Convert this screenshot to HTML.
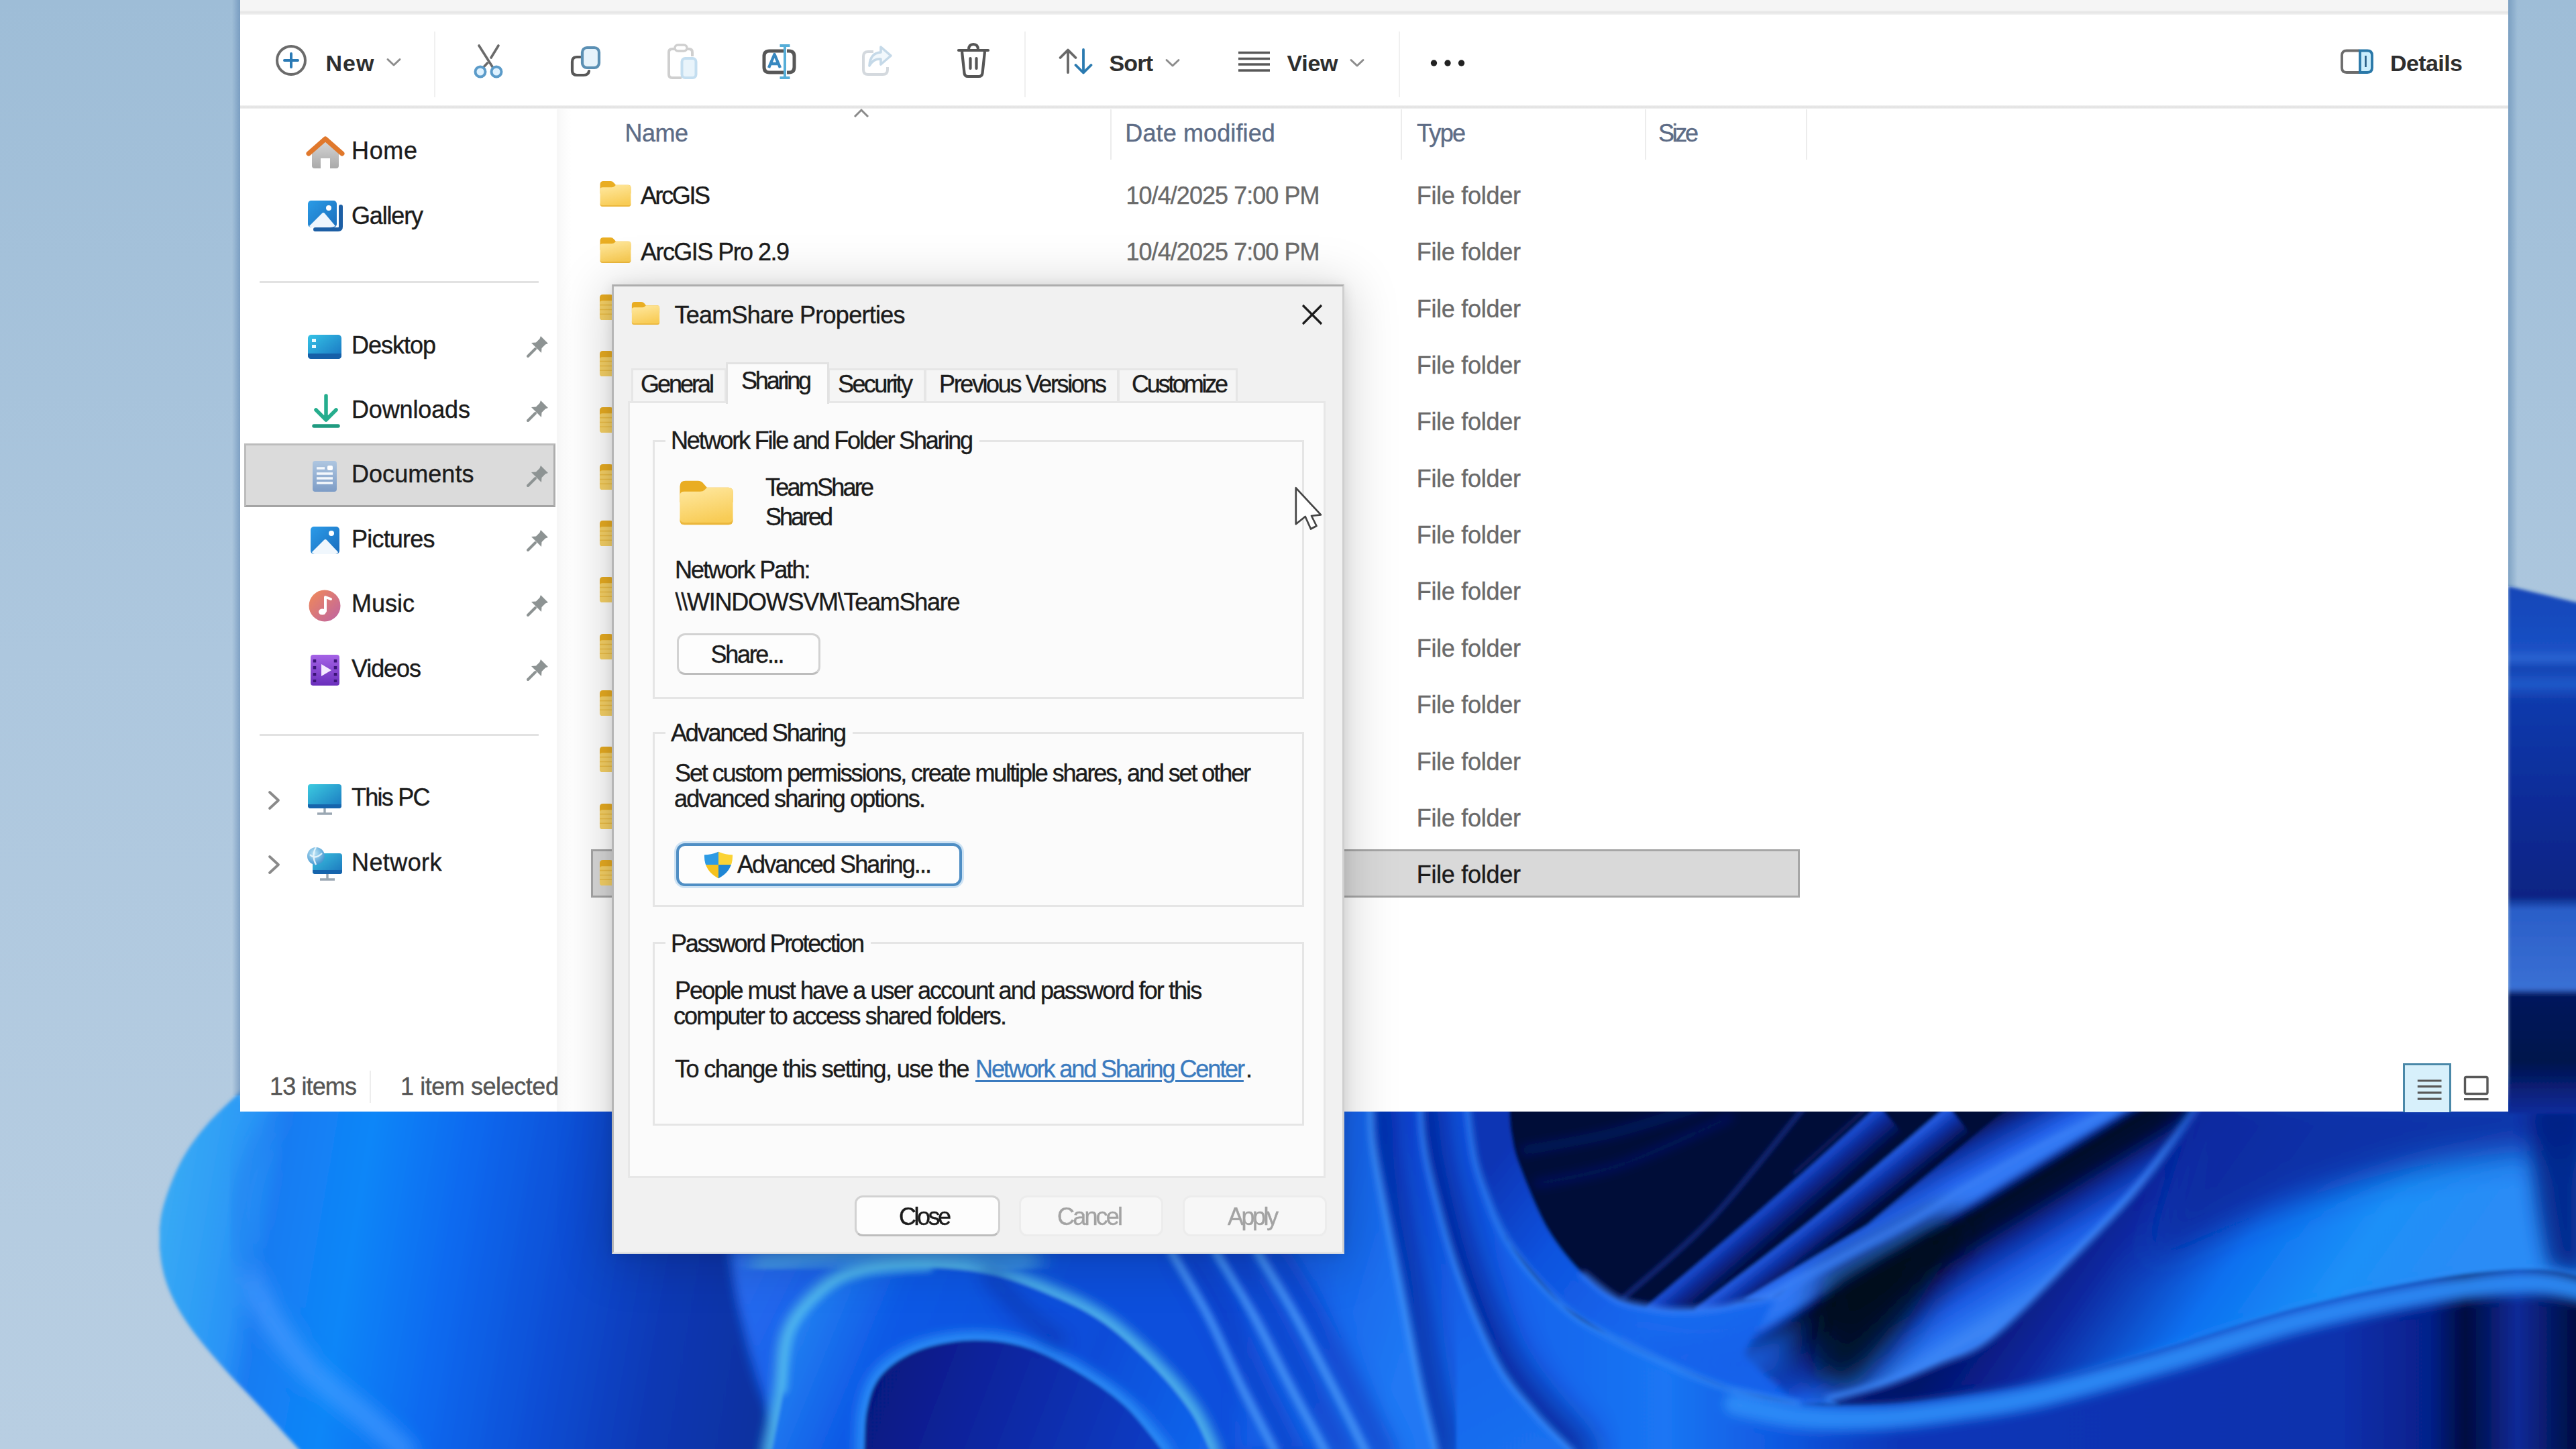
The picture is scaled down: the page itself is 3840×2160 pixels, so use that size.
<!DOCTYPE html>
<html lang="en"><head><meta charset="utf-8"><title>TeamShare Properties</title>
<style>
html,body{margin:0;padding:0;}
body{width:3840px;height:2160px;overflow:hidden;position:relative;background:#a9c4da;font-family:"Liberation Sans",sans-serif;}
div,span,svg{position:absolute;box-sizing:border-box;}
.screen{left:0;top:0;width:3840px;height:2160px;overflow:hidden;}
span{white-space:pre;line-height:1;-webkit-text-stroke:0.4px currentColor;}
</style></head>
<body>
<div class="screen">
<svg width="3840" height="2160" viewBox="0 0 3840 2160" style="left:0;top:0"><defs><linearGradient id="sky" x1="0" y1="0" x2="0" y2="1"><stop offset="0" stop-color="#9ebdd7"/><stop offset="0.45" stop-color="#adc7de"/><stop offset="1" stop-color="#b8cee2"/></linearGradient><filter id="b3" x="-30%" y="-30%" width="160%" height="160%"><feGaussianBlur stdDeviation="2.5"/></filter><filter id="b4" x="-30%" y="-30%" width="160%" height="160%"><feGaussianBlur stdDeviation="4"/></filter><filter id="b8" x="-30%" y="-30%" width="160%" height="160%"><feGaussianBlur stdDeviation="8"/></filter><filter id="b14" x="-30%" y="-30%" width="160%" height="160%"><feGaussianBlur stdDeviation="14"/></filter><filter id="b24" x="-30%" y="-30%" width="160%" height="160%"><feGaussianBlur stdDeviation="24"/></filter><filter id="b40" x="-30%" y="-30%" width="160%" height="160%"><feGaussianBlur stdDeviation="40"/></filter><filter id="b70" x="-30%" y="-30%" width="160%" height="160%"><feGaussianBlur stdDeviation="70"/></filter><linearGradient id="petL" gradientUnits="userSpaceOnUse" x1="240" y1="1830" x2="1180" y2="1990"><stop offset="0" stop-color="#38a9f4"/><stop offset="0.07" stop-color="#2f9ff5"/><stop offset="0.13" stop-color="#2a93f6"/><stop offset="0.17" stop-color="#1a7cf2"/><stop offset="0.3" stop-color="#0b86f8"/><stop offset="0.45" stop-color="#0a6af0"/><stop offset="0.62" stop-color="#0a4fd6"/><stop offset="0.8" stop-color="#0a38b4"/><stop offset="1" stop-color="#08309c"/></linearGradient><radialGradient id="glL" gradientUnits="userSpaceOnUse" cx="600" cy="1990" r="330" gradientTransform="rotate(-35 600 1990) scale(0.7 1.6) translate(260 -700)"><stop offset="0" stop-color="#0a94ff" stop-opacity="0.85"/><stop offset="1" stop-color="#0a94ff" stop-opacity="0"/></radialGradient><linearGradient id="deepA" gradientUnits="userSpaceOnUse" x1="850" y1="0" x2="1180" y2="0"><stop offset="0" stop-color="#0a45cc"/><stop offset="0.5" stop-color="#0836b0"/><stop offset="1" stop-color="#0a3fc0"/></linearGradient><linearGradient id="petA" gradientUnits="userSpaceOnUse" x1="1090" y1="1900" x2="1500" y2="2100"><stop offset="0" stop-color="#2a6cf0"/><stop offset="0.35" stop-color="#165fe8"/><stop offset="1" stop-color="#0c50dc"/></linearGradient><linearGradient id="petB" gradientUnits="userSpaceOnUse" x1="1170" y1="1900" x2="1800" y2="2160"><stop offset="0" stop-color="#2a8cf5"/><stop offset="0.25" stop-color="#0e5ae6"/><stop offset="0.7" stop-color="#0a4cd8"/><stop offset="1" stop-color="#1266ec"/></linearGradient><linearGradient id="petC" gradientUnits="userSpaceOnUse" x1="1300" y1="2000" x2="1720" y2="2160"><stop offset="0" stop-color="#06177c"/><stop offset="0.35" stop-color="#08229a"/><stop offset="1" stop-color="#0b3cc4"/></linearGradient><linearGradient id="stE" gradientUnits="userSpaceOnUse" x1="1700" y1="1870" x2="2100" y2="2000"><stop offset="0" stop-color="#0d4fdc"/><stop offset="0.5" stop-color="#0a46d2"/><stop offset="1" stop-color="#1260ea"/></linearGradient><linearGradient id="pa" gradientUnits="userSpaceOnUse" x1="2628" y1="1801" x2="2662.065033120891" y2="1840.2883381994277"><stop offset="0" stop-color="#1c4ed2"/><stop offset="0.35" stop-color="#0a2c9c"/><stop offset="1" stop-color="#030a38"/></linearGradient><linearGradient id="pb" gradientUnits="userSpaceOnUse" x1="2691" y1="1826" x2="2722.3229203763362" y2="1864.972742514451"><stop offset="0" stop-color="#2258dc"/><stop offset="0.35" stop-color="#0c32a8"/><stop offset="1" stop-color="#030a38"/></linearGradient><linearGradient id="dp3" gradientUnits="userSpaceOnUse" x1="2860" y1="1718" x2="2900" y2="1792"><stop offset="0" stop-color="#040e44"/><stop offset="0.35" stop-color="#0c30a0"/><stop offset="0.75" stop-color="#2260e8"/><stop offset="1" stop-color="#3a80f6"/></linearGradient><linearGradient id="b4g" gradientUnits="userSpaceOnUse" x1="2250" y1="1700" x2="2700" y2="2060"><stop offset="0" stop-color="#0a34b4"/><stop offset="0.25" stop-color="#0e52de"/><stop offset="0.6" stop-color="#1a6cf0"/><stop offset="1" stop-color="#165fe8"/></linearGradient><linearGradient id="val" gradientUnits="userSpaceOnUse" x1="2790" y1="1880" x2="2878" y2="2025"><stop offset="0" stop-color="#3078f4"/><stop offset="0.04" stop-color="#0a2a98"/><stop offset="0.1" stop-color="#020828"/><stop offset="0.28" stop-color="#030a34"/><stop offset="0.48" stop-color="#0a2c9c"/><stop offset="0.7" stop-color="#1a58e0"/><stop offset="0.9" stop-color="#2a74f2"/><stop offset="1" stop-color="#3a84f4"/></linearGradient><linearGradient id="p1" gradientUnits="userSpaceOnUse" x1="3090" y1="1740" x2="3540" y2="2060"><stop offset="0" stop-color="#04126a"/><stop offset="0.22" stop-color="#0a28a0"/><stop offset="0.5" stop-color="#0c70f0"/><stop offset="0.76" stop-color="#1c90f8"/><stop offset="1" stop-color="#2a8cf6"/></linearGradient><linearGradient id="lowR" gradientUnits="userSpaceOnUse" x1="2100" y1="2100" x2="3840" y2="2100"><stop offset="0" stop-color="#0c48d2"/><stop offset="0.1" stop-color="#1664ec"/><stop offset="0.22" stop-color="#1a76f4"/><stop offset="0.32" stop-color="#1058e0"/><stop offset="0.42" stop-color="#0a36b8"/><stop offset="0.8" stop-color="#0a30ac"/><stop offset="0.875" stop-color="#06208a"/><stop offset="0.905" stop-color="#030b40"/><stop offset="0.95" stop-color="#0a2a98"/><stop offset="1" stop-color="#030d42"/></linearGradient><linearGradient id="b2g" gradientUnits="userSpaceOnUse" x1="2050" y1="1700" x2="2300" y2="2160"><stop offset="0" stop-color="#0c48d2"/><stop offset="0.6" stop-color="#1664ea"/><stop offset="1" stop-color="#1a70f0"/></linearGradient><linearGradient id="b1g" gradientUnits="userSpaceOnUse" x1="1760" y1="1900" x2="2100" y2="2000"><stop offset="0" stop-color="#0d50dc"/><stop offset="0.6" stop-color="#1665ea"/><stop offset="1" stop-color="#2078f4"/></linearGradient><linearGradient id="rs" gradientUnits="userSpaceOnUse" x1="0" y1="880" x2="0" y2="1660"><stop offset="0" stop-color="#1446b8"/><stop offset="0.11" stop-color="#1a50c4"/><stop offset="0.13" stop-color="#2a62d0"/><stop offset="0.15" stop-color="#1444b4"/><stop offset="0.18" stop-color="#2058c8"/><stop offset="0.21" stop-color="#0f3aac"/><stop offset="0.4" stop-color="#0a2c98"/><stop offset="0.585" stop-color="#082484"/><stop offset="0.61" stop-color="#2a5ec8"/><stop offset="0.76" stop-color="#3a70d4"/><stop offset="0.775" stop-color="#06185c"/><stop offset="0.9" stop-color="#04124c"/><stop offset="1" stop-color="#0a2c9c"/></linearGradient></defs><rect width="3840" height="2160" fill="url(#sky)"/><g filter="url(#b3)"><path d="M360 1626 C352 1634 326 1657 311 1674 C296 1691 283 1708 272 1728 C261 1748 251 1774 245 1794 C239 1814 238 1828 238 1848 C238 1868 241 1890 248 1911 C255 1932 266 1952 280 1973 C294 1994 312 2014 330 2035 C348 2056 368 2075 388 2097 C408 2119 440 2154 450 2165 L3900 2165 L3900 905 L3840 898 L3739 874 L3739 1640 L360 1640 Z" fill="#0a45cc" />
<path d="M360 1626 C352 1634 326 1657 311 1674 C296 1691 283 1708 272 1728 C261 1748 251 1774 245 1794 C239 1814 238 1828 238 1848 C238 1868 241 1890 248 1911 C255 1932 266 1952 280 1973 C294 1994 312 2014 330 2035 C348 2056 368 2075 388 2097 C408 2119 440 2154 450 2165 L1300 2165 L1300 1640 L360 1640 Z" fill="url(#petL)" />
<path d="M373 1903 C379 1915 392 1949 408 1973 C424 1997 442 2022 466 2046 C490 2070 528 2096 551 2116 C574 2136 597 2157 606 2165" fill="none" stroke="#4a9cff" stroke-width="34" stroke-linecap="round" opacity="0.75" filter="url(#b14)" />
<path d="M419 1660 C413 1669 393 1697 384 1716 C375 1735 369 1756 365 1775 C361 1794 360 1812 361 1833 C362 1854 371 1891 373 1903" fill="none" stroke="#1c7cf0" stroke-width="26" stroke-linecap="round" opacity="0.6" filter="url(#b14)" />
<path d="M1086 1860 C1089 1876 1094 1920 1102 1955 C1110 1990 1121 2037 1133 2072 C1145 2107 1166 2150 1172 2165 L2300 2165 L2300 1860 Z" fill="url(#petA)" filter="url(#b8)"/>
<path d="M1150 2165 C1153 2150 1163 2102 1168 2072 C1173 2042 1170 2011 1180 1986 C1190 1961 1212 1939 1230 1924 C1248 1909 1262 1903 1288 1897 C1314 1891 1353 1888 1385 1889 C1417 1890 1453 1894 1482 1901 C1511 1908 1534 1917 1560 1928 C1586 1939 1612 1950 1638 1967 C1664 1984 1692 2010 1715 2033 C1738 2056 1759 2081 1774 2103 C1789 2125 1800 2155 1805 2165" fill="none" stroke="#4fb4ea" stroke-width="30" stroke-linecap="round" opacity="0.95" filter="url(#b8)" />
<path d="M1150 2165 C1153 2150 1163 2102 1168 2072 C1173 2042 1170 2011 1180 1986 C1190 1961 1212 1939 1230 1924 C1248 1909 1262 1903 1288 1897 C1314 1891 1353 1888 1385 1889 C1417 1890 1453 1894 1482 1901 C1511 1908 1534 1917 1560 1928 C1586 1939 1612 1950 1638 1967 C1664 1984 1692 2010 1715 2033 C1738 2056 1759 2081 1774 2103 C1789 2125 1800 2155 1805 2165  Z" fill="url(#petB)" />
<path d="M1168 2072 C1170 2058 1170 2011 1180 1986 C1190 1961 1212 1939 1230 1924 C1248 1909 1262 1903 1288 1897 C1314 1891 1369 1890 1385 1889" fill="none" stroke="#49b0f0" stroke-width="12" stroke-linecap="round" opacity="0.9" filter="url(#b4)" />
<path d="M1130 1885 C1152 1882 1215 1871 1260 1868 C1305 1865 1353 1864 1400 1866 C1447 1868 1517 1878 1540 1880" fill="none" stroke="#56b8e4" stroke-width="26" stroke-linecap="round" opacity="0.8" filter="url(#b14)" />
<path d="M1288 2165 C1289 2155 1288 2122 1292 2103 C1296 2084 1300 2067 1312 2052 C1324 2037 1344 2023 1366 2014 C1388 2005 1418 1999 1444 1998 C1470 1997 1495 1999 1521 2006 C1547 2013 1573 2026 1599 2041 C1625 2056 1653 2074 1676 2095 C1699 2116 1725 2153 1735 2165" fill="none" stroke="#2f8ff8" stroke-width="26" stroke-linecap="round" opacity="0.95" filter="url(#b8)" />
<path d="M1288 2165 C1289 2155 1288 2122 1292 2103 C1296 2084 1300 2067 1312 2052 C1324 2037 1344 2023 1366 2014 C1388 2005 1418 1999 1444 1998 C1470 1997 1495 1999 1521 2006 C1547 2013 1573 2026 1599 2041 C1625 2056 1653 2074 1676 2095 C1699 2116 1725 2153 1735 2165  Z" fill="url(#petC)" />
<path d="M1474 1898 C1482 1907 1502 1933 1520 1950 C1538 1967 1570 1992 1580 2000" fill="none" stroke="#06279a" stroke-width="20" stroke-linecap="round" opacity="0.6" filter="url(#b14)" />
<path d="M2200 1640 L3300 1640 L3300 2100 L2300 2100 Z" fill="#030a38"/>
<path d="M2270 1715 C2292 1711 2355 1701 2400 1690 C2445 1679 2517 1655 2540 1648" fill="none" stroke="#0b2a8c" stroke-width="9" stroke-linecap="round" opacity="0.75" filter="url(#b8)" />
<path d="M2290 1765 C2312 1760 2372 1752 2420 1735 C2468 1718 2553 1677 2580 1665" fill="none" stroke="#0b2a8c" stroke-width="9" stroke-linecap="round" opacity="0.65" filter="url(#b8)" />
<path d="M2420 1935 C2442 1915 2509 1862 2554 1814 C2599 1766 2667 1677 2690 1650" fill="none" stroke="#16348e" stroke-width="6" stroke-linecap="round" opacity="0.9" filter="url(#b3)" />
<path d="M2675 1749 L2785 1650" fill="none" stroke="#0f2878" stroke-width="5" stroke-linecap="round" opacity="0.8" filter="url(#b3)" />
<path d="M2454 1948 C2483 1924 2570 1851 2628 1801 C2686 1751 2771 1674 2800 1648 L2836 1689 L2664 1842 L2490 1989 Z" fill="url(#pa)"/>
<path d="M2526 1951 C2554 1930 2628 1876 2691 1826 C2754 1776 2868 1678 2903 1648 L2936 1689 L2724 1867 L2559 1992 Z" fill="url(#pb)"/>
<path d="M2597 1938 L2784 1826 L2997 1648 L3170 1648 L3141 1662 L3001 1733 L2846 1823 L2675 1913 L2640 1935 Z" fill="url(#dp3)"/>
<path d="M2249 1640 C2250 1648 2250 1674 2253 1690 C2256 1706 2256 1713 2265 1737 C2274 1761 2292 1807 2308 1834 C2324 1861 2343 1883 2360 1900 C2377 1917 2394 1930 2411 1938 C2428 1946 2444 1947 2460 1950 C2476 1953 2487 1954 2504 1954 C2521 1954 2544 1952 2560 1950 C2576 1948 2582 1945 2597 1942 C2612 1939 2635 1937 2648 1932 C2661 1927 2656 1924 2675 1913 C2694 1902 2732 1883 2760 1868 C2788 1853 2806 1846 2846 1823 C2886 1800 2952 1760 3001 1733 C3050 1706 3111 1678 3141 1662 C3171 1646 3174 1644 3180 1640 L3300 1655 L3300 2100 L2804 2094 L2680 2092 L2586 2073 L2493 2036 L2400 1992 L2327 1945 L2249 1853 L2207 1756 L2194 1700 L2187 1640 Z" fill="url(#b4g)" />
<path d="M2648 1932 C2652 1929 2656 1924 2675 1913 C2694 1902 2732 1883 2760 1868 C2788 1853 2806 1846 2846 1823 C2886 1800 2952 1760 3001 1733 C3050 1706 3111 1678 3141 1662 C3171 1646 3174 1644 3180 1640 L3285 1640 L3282 1640 L3240 1700 L3180 1777 L3094 1868 L2970 1990 L2890 2030 L2810 2062 L2726 2086 L2680 2092 L2600 2020 Z" fill="url(#val)" filter="url(#b4)"/>
<path d="M2400 1975 L2524 2000 L2640 1990 L2700 1960 L2660 2050 L2590 2080 L2450 2030 Z" fill="#1862ea" filter="url(#b24)" opacity="0.95"/>
<path d="M2720 1905 L2800 1862 L2900 1810 L2930 1830 L2830 1990 L2760 2075 L2700 2050 Z" fill="#02071f" filter="url(#b24)" opacity="0.9"/>
<path d="M2360 1900 C2368 1906 2394 1930 2411 1938 C2428 1946 2444 1947 2460 1950 C2476 1953 2487 1954 2504 1954 C2521 1954 2544 1952 2560 1950 C2576 1948 2582 1945 2597 1942 C2612 1939 2635 1937 2648 1932 C2661 1927 2656 1924 2675 1913 C2694 1902 2732 1883 2760 1868 C2788 1853 2806 1846 2846 1823 C2886 1800 2952 1760 3001 1733 C3050 1706 3111 1678 3141 1662 C3171 1646 3174 1644 3180 1640" fill="none" stroke="#3a80f6" stroke-width="9" stroke-linecap="round" opacity="0.9" filter="url(#b4)" />
<path d="M3282 1640 C3275 1650 3257 1677 3240 1700 C3223 1723 3204 1749 3180 1777 C3156 1805 3129 1832 3094 1868 C3059 1904 3004 1963 2970 1990 C2936 2017 2917 2018 2890 2030 C2863 2042 2837 2053 2810 2062 C2783 2071 2740 2082 2726 2086 L2760 2100 L2900 2094 L3034 2067 L3228 2009 L3422 1950 L3616 1908 L3772 1892 L3860 1906 L3860 1640 Z" fill="url(#p1)" />
<path d="M2726 2086 C2740 2082 2783 2071 2810 2062 C2837 2053 2863 2042 2890 2030 C2917 2018 2936 2017 2970 1990 C3004 1963 3059 1904 3094 1868 C3129 1832 3156 1805 3180 1777 C3204 1749 3223 1723 3240 1700 C3257 1677 3275 1650 3282 1640" fill="none" stroke="#3f88f6" stroke-width="10" stroke-linecap="round" opacity="0.9" filter="url(#b4)" />
<path d="M3280 1620 L3860 1620 L3860 1715 C3700 1710 3500 1740 3200 1880 Z" fill="#0a2aa0" opacity="0.9" filter="url(#b24)"/>
<path d="M3775 1640 L3860 1640 L3860 1900 L3800 1890 C3780 1800 3768 1700 3775 1640 Z" fill="#051c80" opacity="0.85" filter="url(#b14)"/>
<path d="M2187 1640 C2188 1650 2191 1681 2194 1700 C2197 1719 2198 1730 2207 1756 C2216 1782 2229 1822 2249 1853 C2269 1884 2302 1922 2327 1945 C2352 1968 2372 1977 2400 1992 C2428 2007 2462 2022 2493 2036 C2524 2050 2555 2064 2586 2073 C2617 2082 2644 2088 2680 2092 C2716 2096 2763 2096 2804 2094 C2845 2092 2887 2086 2928 2080 C2969 2074 3002 2070 3052 2058 C3102 2046 3166 2027 3228 2009 C3290 1991 3357 1967 3422 1950 C3487 1933 3558 1918 3616 1908 C3674 1898 3731 1892 3772 1892 C3813 1892 3845 1904 3860 1906 L3860 2165 L2100 2165 L2100 1640 Z" fill="url(#lowR)" />
<path d="M2586 2093 C2602 2096 2644 2108 2680 2112 C2716 2116 2763 2116 2804 2114 C2845 2112 2887 2106 2928 2100 C2969 2094 3002 2090 3052 2078 C3102 2066 3166 2047 3228 2029 C3290 2011 3357 1987 3422 1970 C3487 1953 3558 1938 3616 1928 C3674 1918 3731 1912 3772 1912 C3813 1912 3845 1924 3860 1926" fill="none" stroke="#2f8cf8" stroke-width="34" stroke-linecap="round" opacity="0.95" filter="url(#b8)" />
<path d="M2187 1640 C2188 1650 2191 1681 2194 1700 C2197 1719 2198 1730 2207 1756 C2216 1782 2229 1822 2249 1853 C2269 1884 2302 1922 2327 1945 C2352 1968 2372 1977 2400 1992 C2428 2007 2462 2022 2493 2036 C2524 2050 2555 2064 2586 2073 C2617 2082 2664 2089 2680 2092" fill="none" stroke="#3a8ef8" stroke-width="8" stroke-linecap="round" opacity="0.8" filter="url(#b4)" />
<path d="M2117 1640 C2118 1650 2119 1681 2122 1700 C2125 1719 2125 1724 2133 1756 C2141 1788 2156 1847 2172 1892 C2188 1937 2211 1992 2230 2028 C2249 2064 2269 2083 2288 2106 C2307 2129 2336 2155 2346 2165" fill="none" stroke="#041e8c" stroke-width="64" stroke-linecap="round" opacity="0.85" filter="url(#b24)" />
<path d="M2117 1640 C2118 1650 2119 1681 2122 1700 C2125 1719 2125 1724 2133 1756 C2141 1788 2156 1847 2172 1892 C2188 1937 2211 1992 2230 2028 C2249 2064 2269 2083 2288 2106 C2307 2129 2336 2155 2346 2165 L2000 2165 L2000 1640 Z" fill="url(#b2g)" />
<path d="M2117 1640 C2118 1650 2119 1681 2122 1700 C2125 1719 2125 1724 2133 1756 C2141 1788 2156 1847 2172 1892 C2188 1937 2211 1992 2230 2028 C2249 2064 2269 2083 2288 2106 C2307 2129 2336 2155 2346 2165" fill="none" stroke="#3f90fa" stroke-width="8" stroke-linecap="round" opacity="0.85" filter="url(#b4)" />
<path d="M2043 1640 C2044 1650 2043 1674 2046 1700 C2049 1726 2055 1753 2063 1795 C2071 1837 2085 1905 2094 1950 C2103 1995 2109 2031 2117 2067 C2125 2103 2137 2149 2141 2165" fill="none" stroke="#041e8c" stroke-width="60" stroke-linecap="round" opacity="0.85" filter="url(#b24)" />
<path d="M2043 1640 C2044 1650 2043 1674 2046 1700 C2049 1726 2055 1753 2063 1795 C2071 1837 2085 1905 2094 1950 C2103 1995 2109 2031 2117 2067 C2125 2103 2137 2149 2141 2165 L1850 2165 L1850 2000 L1870 1860 L2000 1640 Z" fill="url(#b1g)" filter="url(#b14)"/>
<path d="M2043 1640 C2044 1650 2043 1674 2046 1700 C2049 1726 2055 1753 2063 1795 C2071 1837 2085 1905 2094 1950 C2103 1995 2109 2031 2117 2067 C2125 2103 2137 2149 2141 2165 L1960 2165 L1960 1640 Z" fill="url(#b1g)" />
<path d="M2043 1640 C2044 1650 2043 1674 2046 1700 C2049 1726 2055 1753 2063 1795 C2071 1837 2085 1905 2094 1950 C2103 1995 2109 2031 2117 2067 C2125 2103 2137 2149 2141 2165" fill="none" stroke="#4a9afa" stroke-width="8" stroke-linecap="round" opacity="0.85" filter="url(#b4)" />
<path d="M1772 1866 C1781 1882 1808 1926 1826 1960 C1844 1994 1861 2036 1878 2070 C1895 2104 1919 2149 1927 2165" fill="none" stroke="#0a3cc4" stroke-width="40" stroke-linecap="round" opacity="0.7" filter="url(#b14)" />
<path d="M1746 1866 C1755 1882 1782 1926 1800 1960 C1818 1994 1835 2036 1852 2070 C1869 2104 1893 2149 1901 2165" fill="none" stroke="#4a96f8" stroke-width="11" stroke-linecap="round" opacity="0.95" filter="url(#b4)" />
<path d="M1838 1866 C1847 1882 1875 1926 1894 1960 C1913 1994 1933 2036 1951 2070 C1969 2104 1994 2149 2002 2165" fill="none" stroke="#0a3cc4" stroke-width="40" stroke-linecap="round" opacity="0.7" filter="url(#b14)" />
<path d="M1812 1866 C1821 1882 1849 1926 1868 1960 C1887 1994 1907 2036 1925 2070 C1943 2104 1968 2149 1976 2165" fill="none" stroke="#4a96f8" stroke-width="11" stroke-linecap="round" opacity="0.95" filter="url(#b4)" />
<path d="M1900 1866 C1909 1882 1937 1926 1956 1960 C1975 1994 1996 2036 2014 2070 C2032 2104 2054 2149 2062 2165" fill="none" stroke="#0a3cc4" stroke-width="40" stroke-linecap="round" opacity="0.7" filter="url(#b14)" />
<path d="M1874 1866 C1883 1882 1911 1926 1930 1960 C1949 1994 1970 2036 1988 2070 C2006 2104 2028 2149 2036 2165" fill="none" stroke="#4a96f8" stroke-width="11" stroke-linecap="round" opacity="0.95" filter="url(#b4)" />
<path d="M3739 874 L3860 903 L3860 1660 L3739 1660 Z" fill="url(#rs)"/></g></svg>
<div style="left:346px;top:0px;width:12px;height:1633px;background:linear-gradient(90deg,rgba(90,130,175,0),rgba(90,130,175,0.55));"></div>
<div style="left:3739px;top:0px;width:14px;height:874px;background:linear-gradient(90deg,rgba(100,140,180,0.6),rgba(100,140,180,0));"></div>
<div style="left:358px;top:0px;width:3381px;height:1657px;background:#ffffff;overflow:hidden;"><div style="left:0px;top:0px;width:3381px;height:17px;background:#f5f5f5;"></div><div style="left:0px;top:16px;width:3381px;height:6px;background:linear-gradient(#ececec,#e6e6e6 50%,#f4f4f4);"></div><div style="left:0px;top:157px;width:3381px;height:5px;background:linear-gradient(#f2f2f2,#e0e0e0 50%,#f0f0f0);"></div><div style="left:472px;top:163px;width:22px;height:1494px;background:linear-gradient(90deg,#f6f6f6,#fbfbfb 45%,#ffffff);"></div></div>
<div style="left:647px;top:47px;width:2px;height:98px;background:#f0f0f0;"></div>
<div style="left:1527px;top:47px;width:2px;height:98px;background:#f0f0f0;"></div>
<div style="left:2085px;top:47px;width:2px;height:98px;background:#f0f0f0;"></div>
<svg style="left:408px;top:64px" width="52" height="52" viewBox="0 0 52 52"><circle cx="26" cy="26" r="21" fill="none" stroke="#6b6b6b" stroke-width="4"/><path d="M26 16V36M16 26H36" stroke="#2b7ab5" stroke-width="4" stroke-linecap="round"/></svg>
<svg style="left:574.5px;top:84.5px" width="24" height="16" viewBox="0 0 24 16"><path d="M3 3.5 L12 12 L21 3.5" fill="none" stroke="#8c8c8c" stroke-width="3" stroke-linecap="round" stroke-linejoin="round"/></svg>
<svg style="left:700px;top:62px" width="56" height="60" viewBox="0 0 56 60"><path d="M14 6 L40 47" stroke="#6a6a6a" stroke-width="3.6" stroke-linecap="round"/><path d="M43 6 L32 24" stroke="#6a6a6a" stroke-width="3.6" stroke-linecap="round"/><path d="M27.5 31 L19 40" stroke="#6a6a6a" stroke-width="3.6"/><circle cx="16" cy="45" r="7.5" fill="#dff2ff" stroke="#5b9bc9" stroke-width="4"/><circle cx="40" cy="45" r="7.5" fill="#dff2ff" stroke="#5b9bc9" stroke-width="4"/></svg>
<svg style="left:846px;top:64px" width="54" height="54" viewBox="0 0 54 54"><path d="M19 21 H14 Q7 21 7 28 V41 Q7 48 14 48 H24 Q31 48 32 42" fill="none" stroke="#585858" stroke-width="4.2" stroke-linecap="round"/><rect x="22" y="7" width="25" height="30" rx="7" fill="#e6f3fb" stroke="#5b90b4" stroke-width="4.2"/></svg>
<svg style="left:990px;top:62px" width="54" height="60" viewBox="0 0 54 60"><path d="M26 54 H12 Q7 54 7 49 V16 Q7 11 12 11 H37 Q42 11 42 16 V22" fill="none" stroke="#cfcfcf" stroke-width="4"/><rect x="16" y="5" width="18" height="9" rx="4.5" fill="#fff" stroke="#cfcfcf" stroke-width="3.4"/><rect x="26.5" y="25" width="21" height="29" rx="5" fill="#e9f4fb" stroke="#c4def0" stroke-width="4"/></svg>
<svg style="left:1130px;top:62px" width="62" height="60" viewBox="0 0 62 60"><path d="M38 14 H17 Q9 14 9 22 V38 Q9 46 17 46 H38" fill="none" stroke="#575757" stroke-width="5"/><path d="M43 14 H46 Q54 14 54 22 V38 Q54 46 46 46 H43" fill="none" stroke="#575757" stroke-width="5"/><path d="M16 39 L24.5 19 L33 39 M19 33 H30" fill="none" stroke="#3888c0" stroke-width="4.4" stroke-linejoin="round"/><path d="M40 6 V54 M32.5 6 H47.5 M32.5 54 H47.5" stroke="#56aed8" stroke-width="4"/></svg>
<svg style="left:1280px;top:62px" width="56" height="56" viewBox="0 0 56 56"><path d="M22 15 H14 Q7 15 7 22 V42 Q7 49 14 49 H36 Q43 49 43 42 V38" fill="none" stroke="#d4d9de" stroke-width="4"/><path d="M33 8 L48 21 L33 34 V26 Q22 25 16 36 Q17 17 33 16 Z" fill="#f2f8fc" stroke="#c5d9e8" stroke-width="3.6" stroke-linejoin="round"/></svg>
<svg style="left:1424px;top:60px" width="54" height="60" viewBox="0 0 54 60"><path d="M5 15 H49" stroke="#555" stroke-width="4.2" stroke-linecap="round"/><path d="M20 14 Q20 6 27 6 Q34 6 34 14" fill="none" stroke="#555" stroke-width="4"/><path d="M10 17 L13.5 49 Q14 54 19 54 H35 Q40 54 40.500 49 L44 17" fill="none" stroke="#555" stroke-width="4.2"/><path d="M22.500 27 V42 M31.500 27 V42" stroke="#555" stroke-width="4.2" stroke-linecap="round"/></svg>
<svg style="left:1574px;top:66px" width="60" height="50" viewBox="0 0 60 50"><path d="M18 42 V9 M6.500 20 L18 8.500 L29.500 20" fill="none" stroke="#686868" stroke-width="3.8" stroke-linecap="round" stroke-linejoin="round"/><path d="M41 8 V42 M29.500 31 L41 42.500 L52.500 31" fill="none" stroke="#2a7ab0" stroke-width="3.8" stroke-linecap="round" stroke-linejoin="round"/></svg>
<svg style="left:1736px;top:85.5px" width="24" height="16" viewBox="0 0 24 16"><path d="M3 3.5 L12 12 L21 3.5" fill="none" stroke="#8c8c8c" stroke-width="3" stroke-linecap="round" stroke-linejoin="round"/></svg>
<svg style="left:1842px;top:72px" width="56" height="40" viewBox="0 0 56 40"><path d="M4 6.500 H51 M4 15.500 H51 M4 24 H51 M4 33 H51" stroke="#585858" stroke-width="3.6"/></svg>
<svg style="left:2010.5px;top:85.5px" width="24" height="16" viewBox="0 0 24 16"><path d="M3 3.5 L12 12 L21 3.5" fill="none" stroke="#8c8c8c" stroke-width="3" stroke-linecap="round" stroke-linejoin="round"/></svg>
<svg style="left:2128px;top:84px" width="62" height="20" viewBox="0 0 62 20"><circle cx="9.500" cy="10" r="4.700" fill="#222"/><circle cx="30" cy="10" r="4.700" fill="#222"/><circle cx="50.500" cy="10" r="4.700" fill="#222"/></svg>
<svg style="left:3484px;top:68px" width="60" height="48" viewBox="0 0 60 48"><path d="M33 7.500 H14 Q7 7.500 7 14.500 V33 Q7 40 14 40 H33" fill="none" stroke="#6c6c6c" stroke-width="3.800"/><path d="M34 7.500 H45 Q52 7.500 52 14.500 V33 Q52 40 45 40 H34 Z" fill="#cbeefc" stroke="#2a78a8" stroke-width="3.800"/><path d="M42.500 15 V32" stroke="#245a82" stroke-width="2.600"/></svg>
<div style="left:364px;top:661px;width:464px;height:95px;background:#dbdbdb;border:3px solid #bcbcbc;border-bottom-color:#a4a4a4;border-right-color:#adadad;"></div>
<svg style="left:456px;top:200px" width="58" height="56" viewBox="0 0 58 56"><defs><linearGradient id="h1" x1="0" y1="0" x2="0" y2="1"><stop offset="0" stop-color="#d6d6d6"/><stop offset="1" stop-color="#a9a9a9"/></linearGradient></defs><path d="M9 27 L29 10 L49 27 V47 Q49 51 45 51 H36 V36 H22 V51 H13 Q9 51 9 47 Z" fill="url(#h1)"/><path d="M4 29 L29 7 L54 29" fill="none" stroke="#e0782c" stroke-width="7" stroke-linecap="round" stroke-linejoin="round"/></svg>
<svg style="left:456px;top:296px" width="58" height="56" viewBox="0 0 58 56"><defs><linearGradient id="g2" x1="0" y1="0" x2="1" y2="1"><stop offset="0" stop-color="#2a9be6"/><stop offset="1" stop-color="#1b6fbd"/></linearGradient></defs><path d="M14 46 H48 Q52 46 52 42 V12" fill="none" stroke="#1d5fa5" stroke-width="6" stroke-linecap="round"/><rect x="3" y="3" width="43" height="40" rx="5" fill="url(#g2)"/><circle cx="34" cy="14" r="4" fill="#fff"/><path d="M5 41 L24 22 Q26 20 28 22 L44 41 Q40 43 36 43 H9 Q6 43 5 41 Z" fill="#eef6fd"/></svg>
<svg style="left:456px;top:496px" width="58" height="44" viewBox="0 0 58 44"><defs><linearGradient id="d3" x1="0" y1="0" x2="1" y2="1"><stop offset="0" stop-color="#35c3e6"/><stop offset="1" stop-color="#1873c1"/></linearGradient></defs><rect x="3" y="3" width="50" height="36" rx="5" fill="url(#d3)"/><path d="M3 31 H53 V34 Q53 39 48 39 H8 Q3 39 3 34 Z" fill="#155fa8"/><rect x="9" y="9" width="6" height="5" fill="#e8faff"/><rect x="9" y="18" width="6" height="5" fill="#e8faff"/></svg>
<svg style="left:784px;top:498px" width="36" height="36" viewBox="0 0 36 36"><path d="M22 3 L33 14 L29 15.500 L23.500 21 L23 28 L8 13 L15 12.500 L20.500 7 Z" fill="#8d9393"/><path d="M14 22 L3 33" stroke="#8d9393" stroke-width="4" stroke-linecap="round"/></svg>
<svg style="left:462px;top:585px" width="48" height="56" viewBox="0 0 48 56"><path d="M24 5 V40 M9 26 L24 41 L39 26" fill="none" stroke="#25ad8d" stroke-width="5.500" stroke-linecap="round" stroke-linejoin="round"/><path d="M6 50 H42" stroke="#1f9b80" stroke-width="5.500" stroke-linecap="round"/></svg>
<svg style="left:784px;top:594px" width="36" height="36" viewBox="0 0 36 36"><path d="M22 3 L33 14 L29 15.500 L23.500 21 L23 28 L8 13 L15 12.500 L20.500 7 Z" fill="#8d9393"/><path d="M14 22 L3 33" stroke="#8d9393" stroke-width="4" stroke-linecap="round"/></svg>
<svg style="left:463px;top:684px" width="42" height="52" viewBox="0 0 42 52"><defs><linearGradient id="o4" x1="0" y1="0" x2="0" y2="1"><stop offset="0" stop-color="#aec6e0"/><stop offset="1" stop-color="#7d9cc6"/></linearGradient></defs><rect x="3" y="3" width="36" height="46" rx="4" fill="url(#o4)"/><path d="M9 14 H21 M9 22 H33 M9 29 H33 M9 36 H33" stroke="#f4f8fc" stroke-width="3.400"/><rect x="25" y="10" width="8" height="7" rx="2" fill="#fff"/></svg>
<svg style="left:784px;top:691px" width="36" height="36" viewBox="0 0 36 36"><path d="M22 3 L33 14 L29 15.500 L23.500 21 L23 28 L8 13 L15 12.500 L20.500 7 Z" fill="#8d9393"/><path d="M14 22 L3 33" stroke="#8d9393" stroke-width="4" stroke-linecap="round"/></svg>
<svg style="left:460px;top:782px" width="50" height="48" viewBox="0 0 50 48"><defs><linearGradient id="p5" x1="0" y1="0" x2="1" y2="1"><stop offset="0" stop-color="#2c9be8"/><stop offset="1" stop-color="#1a6dbd"/></linearGradient></defs><rect x="3" y="3" width="43" height="41" rx="5" fill="url(#p5)"/><circle cx="34" cy="13" r="4" fill="#fff"/><path d="M5 41 L23 23 Q25 21 27 23 L44 41 Q43 44 40 44 H9 Q6 44 5 41 Z" fill="#f0f7fd"/></svg>
<svg style="left:784px;top:787px" width="36" height="36" viewBox="0 0 36 36"><path d="M22 3 L33 14 L29 15.500 L23.500 21 L23 28 L8 13 L15 12.500 L20.500 7 Z" fill="#8d9393"/><path d="M14 22 L3 33" stroke="#8d9393" stroke-width="4" stroke-linecap="round"/></svg>
<svg style="left:458px;top:877px" width="52" height="52" viewBox="0 0 52 52"><defs><linearGradient id="m6" x1="0" y1="0" x2="1" y2="1"><stop offset="0" stop-color="#f28a56"/><stop offset="1" stop-color="#bd63a4"/></linearGradient></defs><circle cx="26" cy="26" r="23.500" fill="url(#m6)"/><path d="M27 34 V13 L35 16" fill="none" stroke="#fff" stroke-width="4" stroke-linecap="round" stroke-linejoin="round"/><ellipse cx="22.500" cy="35" rx="5.500" ry="4.600" fill="#fff"/></svg>
<svg style="left:784px;top:884px" width="36" height="36" viewBox="0 0 36 36"><path d="M22 3 L33 14 L29 15.500 L23.500 21 L23 28 L8 13 L15 12.500 L20.500 7 Z" fill="#8d9393"/><path d="M14 22 L3 33" stroke="#8d9393" stroke-width="4" stroke-linecap="round"/></svg>
<svg style="left:460px;top:973px" width="50" height="52" viewBox="0 0 50 52"><defs><linearGradient id="v7" x1="0" y1="0" x2="0" y2="1"><stop offset="0" stop-color="#a563e6"/><stop offset="1" stop-color="#6a2fbc"/></linearGradient></defs><rect x="3" y="3" width="43" height="46" rx="4" fill="url(#v7)"/><path d="M19 17 L34 26 L19 35 Z" fill="#f4eaff"/><path d="M9 10 V44 M40 10 V44" stroke="#3b1378" stroke-width="4.500" stroke-dasharray="4.500 5.500"/></svg>
<svg style="left:784px;top:980px" width="36" height="36" viewBox="0 0 36 36"><path d="M22 3 L33 14 L29 15.500 L23.500 21 L23 28 L8 13 L15 12.500 L20.500 7 Z" fill="#8d9393"/><path d="M14 22 L3 33" stroke="#8d9393" stroke-width="4" stroke-linecap="round"/></svg>
<svg style="left:456px;top:1166px" width="58" height="52" viewBox="0 0 58 52"><defs><linearGradient id="t8" x1="0" y1="0" x2="1" y2="1"><stop offset="0" stop-color="#3ccbe0"/><stop offset="1" stop-color="#1a78c0"/></linearGradient></defs><rect x="3" y="3" width="50" height="36" rx="4" fill="url(#t8)"/><path d="M3 33 H53 V35 Q53 39 49 39 H7 Q3 39 3 35 Z" fill="#1664ac"/><path d="M28 39 V46 M17 47 H39" stroke="#9aa7b2" stroke-width="3.400"/></svg>
<svg style="left:456px;top:1260px" width="58" height="56" viewBox="0 0 58 56"><defs><linearGradient id="n9" x1="0" y1="0" x2="1" y2="1"><stop offset="0" stop-color="#3cc3e0"/><stop offset="1" stop-color="#1a74bc"/></linearGradient><radialGradient id="n10" cx=".4" cy=".35" r=".7"><stop offset="0" stop-color="#bfe6f6"/><stop offset="1" stop-color="#3f93cf"/></radialGradient></defs><rect x="10" y="12" width="44" height="31" rx="4" fill="url(#n9)"/><path d="M10 37 H54 V39 Q54 43 50 43 H14 Q10 43 10 39 Z" fill="#1664ac"/><path d="M32 43 V50 M21 51 H43" stroke="#9aa7b2" stroke-width="3.400"/><circle cx="15" cy="16" r="13" fill="url(#n10)"/><path d="M6 14 Q14 22 24 12 M15 3 Q8 15 15 29" fill="none" stroke="#eaf7fd" stroke-width="2.400" opacity=".9"/></svg>
<svg style="left:398px;top:1177px" width="22" height="32" viewBox="0 0 22 32"><path d="M4 4 L17 16 L4 28" fill="none" stroke="#8a8a8a" stroke-width="3.800" stroke-linecap="round" stroke-linejoin="round"/></svg>
<svg style="left:398px;top:1273px" width="22" height="32" viewBox="0 0 22 32"><path d="M4 4 L17 16 L4 28" fill="none" stroke="#8a8a8a" stroke-width="3.800" stroke-linecap="round" stroke-linejoin="round"/></svg>
<div style="left:387px;top:419px;width:416px;height:3px;background:#e2e2e2;"></div>
<div style="left:387px;top:1094px;width:416px;height:3px;background:#e2e2e2;"></div>
<div style="left:1655px;top:163px;width:2px;height:75px;background:#ececec;"></div>
<div style="left:2088px;top:163px;width:2px;height:75px;background:#ececec;"></div>
<div style="left:2452px;top:163px;width:2px;height:75px;background:#ececec;"></div>
<div style="left:2692px;top:163px;width:2px;height:75px;background:#ececec;"></div>
<svg style="left:1270px;top:160px" width="28" height="18" viewBox="0 0 28 18"><path d="M4 14 L14 4 L24 14" fill="none" stroke="#8a8a8a" stroke-width="3"/></svg>
<div style="left:881px;top:1266px;width:1802px;height:72px;background:#d9d9d9;border:3px solid #a6a6a6;"></div>
<svg style="left:893px;top:269px" width="49" height="40" viewBox="0 0 49 41"><defs><linearGradient id="f11" x1="0" y1="0" x2="0.3" y2="1"><stop offset="0" stop-color="#ffe9a2"/><stop offset="1" stop-color="#f8cc56"/></linearGradient></defs><path d="M1 6 Q1 1 6 1 L17 1 Q20 1 22 3.5 L25 7 L44 7 Q48 7 48 11 L48 20 L1 20 Z" fill="#e9ad22"/><path d="M1 14 Q1 10.5 5 10.5 L19 10.5 Q21.5 10.5 23 9 L25 7 L44 7 Q48 7 48 11 L48 36 Q48 40 44 40 L5 40 Q1 40 1 36 Z" fill="url(#f11)"/><path d="M1 36 Q1 40 5 40 L44 40 Q48 40 48 36 L48 34 Q48 38 44 38 L5 38 Q1 38 1 34 Z" fill="#e3a92a" opacity=".6"/></svg>
<svg style="left:893px;top:353px" width="49" height="40" viewBox="0 0 49 41"><defs><linearGradient id="f12" x1="0" y1="0" x2="0.3" y2="1"><stop offset="0" stop-color="#ffe9a2"/><stop offset="1" stop-color="#f8cc56"/></linearGradient></defs><path d="M1 6 Q1 1 6 1 L17 1 Q20 1 22 3.5 L25 7 L44 7 Q48 7 48 11 L48 20 L1 20 Z" fill="#e9ad22"/><path d="M1 14 Q1 10.5 5 10.5 L19 10.5 Q21.5 10.5 23 9 L25 7 L44 7 Q48 7 48 11 L48 36 Q48 40 44 40 L5 40 Q1 40 1 36 Z" fill="url(#f12)"/><path d="M1 36 Q1 40 5 40 L44 40 Q48 40 48 36 L48 34 Q48 38 44 38 L5 38 Q1 38 1 34 Z" fill="#e3a92a" opacity=".6"/></svg>
<svg style="left:893px;top:438px" width="22" height="40" viewBox="0 0 22.5 41" preserveAspectRatio="xMinYMin slice"><path d="M1 6 Q1 1 6 1 L17 1 Q20 1 22 3.5 L25 7 L48 7 L48 20 L1 20 Z" fill="#e9ad22"/><path d="M1 14 Q1 10.5 5 10.5 L48 10.5 L48 40 L5 40 Q1 40 1 36 Z" fill="#f7d267"/><path d="M1 17H48M1 24H48M1 31H48" stroke="#eab93c" stroke-width="1.6" opacity=".8"/></svg>
<svg style="left:893px;top:522px" width="22" height="40" viewBox="0 0 22.5 41" preserveAspectRatio="xMinYMin slice"><path d="M1 6 Q1 1 6 1 L17 1 Q20 1 22 3.5 L25 7 L48 7 L48 20 L1 20 Z" fill="#e9ad22"/><path d="M1 14 Q1 10.5 5 10.5 L48 10.5 L48 40 L5 40 Q1 40 1 36 Z" fill="#f7d267"/><path d="M1 17H48M1 24H48M1 31H48" stroke="#eab93c" stroke-width="1.6" opacity=".8"/></svg>
<svg style="left:893px;top:606px" width="22" height="40" viewBox="0 0 22.5 41" preserveAspectRatio="xMinYMin slice"><path d="M1 6 Q1 1 6 1 L17 1 Q20 1 22 3.5 L25 7 L48 7 L48 20 L1 20 Z" fill="#e9ad22"/><path d="M1 14 Q1 10.5 5 10.5 L48 10.5 L48 40 L5 40 Q1 40 1 36 Z" fill="#f7d267"/><path d="M1 17H48M1 24H48M1 31H48" stroke="#eab93c" stroke-width="1.6" opacity=".8"/></svg>
<svg style="left:893px;top:691px" width="22" height="40" viewBox="0 0 22.5 41" preserveAspectRatio="xMinYMin slice"><path d="M1 6 Q1 1 6 1 L17 1 Q20 1 22 3.5 L25 7 L48 7 L48 20 L1 20 Z" fill="#e9ad22"/><path d="M1 14 Q1 10.5 5 10.5 L48 10.5 L48 40 L5 40 Q1 40 1 36 Z" fill="#f7d267"/><path d="M1 17H48M1 24H48M1 31H48" stroke="#eab93c" stroke-width="1.6" opacity=".8"/></svg>
<svg style="left:893px;top:775px" width="22" height="40" viewBox="0 0 22.5 41" preserveAspectRatio="xMinYMin slice"><path d="M1 6 Q1 1 6 1 L17 1 Q20 1 22 3.5 L25 7 L48 7 L48 20 L1 20 Z" fill="#e9ad22"/><path d="M1 14 Q1 10.5 5 10.5 L48 10.5 L48 40 L5 40 Q1 40 1 36 Z" fill="#f7d267"/><path d="M1 17H48M1 24H48M1 31H48" stroke="#eab93c" stroke-width="1.6" opacity=".8"/></svg>
<svg style="left:893px;top:859px" width="22" height="40" viewBox="0 0 22.5 41" preserveAspectRatio="xMinYMin slice"><path d="M1 6 Q1 1 6 1 L17 1 Q20 1 22 3.5 L25 7 L48 7 L48 20 L1 20 Z" fill="#e9ad22"/><path d="M1 14 Q1 10.5 5 10.5 L48 10.5 L48 40 L5 40 Q1 40 1 36 Z" fill="#f7d267"/><path d="M1 17H48M1 24H48M1 31H48" stroke="#eab93c" stroke-width="1.6" opacity=".8"/></svg>
<svg style="left:893px;top:944px" width="22" height="40" viewBox="0 0 22.5 41" preserveAspectRatio="xMinYMin slice"><path d="M1 6 Q1 1 6 1 L17 1 Q20 1 22 3.5 L25 7 L48 7 L48 20 L1 20 Z" fill="#e9ad22"/><path d="M1 14 Q1 10.5 5 10.5 L48 10.5 L48 40 L5 40 Q1 40 1 36 Z" fill="#f7d267"/><path d="M1 17H48M1 24H48M1 31H48" stroke="#eab93c" stroke-width="1.6" opacity=".8"/></svg>
<svg style="left:893px;top:1028px" width="22" height="40" viewBox="0 0 22.5 41" preserveAspectRatio="xMinYMin slice"><path d="M1 6 Q1 1 6 1 L17 1 Q20 1 22 3.5 L25 7 L48 7 L48 20 L1 20 Z" fill="#e9ad22"/><path d="M1 14 Q1 10.5 5 10.5 L48 10.5 L48 40 L5 40 Q1 40 1 36 Z" fill="#f7d267"/><path d="M1 17H48M1 24H48M1 31H48" stroke="#eab93c" stroke-width="1.6" opacity=".8"/></svg>
<svg style="left:893px;top:1112px" width="22" height="40" viewBox="0 0 22.5 41" preserveAspectRatio="xMinYMin slice"><path d="M1 6 Q1 1 6 1 L17 1 Q20 1 22 3.5 L25 7 L48 7 L48 20 L1 20 Z" fill="#e9ad22"/><path d="M1 14 Q1 10.5 5 10.5 L48 10.5 L48 40 L5 40 Q1 40 1 36 Z" fill="#f7d267"/><path d="M1 17H48M1 24H48M1 31H48" stroke="#eab93c" stroke-width="1.6" opacity=".8"/></svg>
<svg style="left:893px;top:1197px" width="22" height="40" viewBox="0 0 22.5 41" preserveAspectRatio="xMinYMin slice"><path d="M1 6 Q1 1 6 1 L17 1 Q20 1 22 3.5 L25 7 L48 7 L48 20 L1 20 Z" fill="#e9ad22"/><path d="M1 14 Q1 10.5 5 10.5 L48 10.5 L48 40 L5 40 Q1 40 1 36 Z" fill="#f7d267"/><path d="M1 17H48M1 24H48M1 31H48" stroke="#eab93c" stroke-width="1.6" opacity=".8"/></svg>
<svg style="left:893px;top:1281px" width="22" height="40" viewBox="0 0 22.5 41" preserveAspectRatio="xMinYMin slice"><path d="M1 6 Q1 1 6 1 L17 1 Q20 1 22 3.5 L25 7 L48 7 L48 20 L1 20 Z" fill="#e9ad22"/><path d="M1 14 Q1 10.5 5 10.5 L48 10.5 L48 40 L5 40 Q1 40 1 36 Z" fill="#f7d267"/><path d="M1 17H48M1 24H48M1 31H48" stroke="#eab93c" stroke-width="1.6" opacity=".8"/></svg>
<div style="left:551px;top:1596px;width:2px;height:48px;background:#ededed;"></div>
<div style="left:3582px;top:1585px;width:72px;height:73px;background:#d7f0fb;border:3px solid #4a88a8;border-bottom:none;"></div>
<svg style="left:3600px;top:1600px" width="44" height="48" viewBox="0 0 44 48"><path d="M3.8 11H39.5M3.8 19.7H39.5M3.8 28.8H39.5M3.8 38.100H39.5" stroke="#585858" stroke-width="3.200"/></svg>
<svg style="left:3668px;top:1598px" width="48" height="48" viewBox="0 0 48 48"><rect x="6.500" y="7.500" width="33.500" height="25" rx="2" fill="none" stroke="#585858" stroke-width="3.400"/><path d="M5 40.600H41.500" stroke="#585858" stroke-width="3.200"/></svg>
<div style="left:912px;top:424px;width:1092px;height:1445px;background:#f1f1f1;border:3px solid;border-color:#adadad #cfcfcf #e4e4e4 #b6b6b6;box-shadow:0 8px 70px 8px rgba(0,0,0,0.17), 0 2px 18px rgba(0,0,0,0.10);"></div>
<svg style="left:940px;top:449px" width="45" height="36" viewBox="0 0 49 41"><defs><linearGradient id="f13" x1="0" y1="0" x2="0.3" y2="1"><stop offset="0" stop-color="#ffe9a2"/><stop offset="1" stop-color="#f8cc56"/></linearGradient></defs><path d="M1 6 Q1 1 6 1 L17 1 Q20 1 22 3.5 L25 7 L44 7 Q48 7 48 11 L48 20 L1 20 Z" fill="#e9ad22"/><path d="M1 14 Q1 10.5 5 10.5 L19 10.5 Q21.5 10.5 23 9 L25 7 L44 7 Q48 7 48 11 L48 36 Q48 40 44 40 L5 40 Q1 40 1 36 Z" fill="url(#f13)"/><path d="M1 36 Q1 40 5 40 L44 40 Q48 40 48 36 L48 34 Q48 38 44 38 L5 38 Q1 38 1 34 Z" fill="#e3a92a" opacity=".6"/></svg>
<svg style="left:1938px;top:451px" width="36" height="36" viewBox="0 0 36 36"><path d="M4 4L32 32M32 4L4 32" stroke="#1b1b1b" stroke-width="3.2" fill="none"/></svg>
<div style="left:941px;top:549px;width:142px;height:53px;background:#f5f5f5;border:3px solid #e6e6e6;border-bottom:none;"></div>
<div style="left:1234px;top:549px;width:146px;height:53px;background:#f5f5f5;border:3px solid #e6e6e6;border-bottom:none;"></div>
<div style="left:1378px;top:549px;width:290px;height:53px;background:#f5f5f5;border:3px solid #e6e6e6;border-bottom:none;"></div>
<div style="left:1666px;top:549px;width:179px;height:53px;background:#f5f5f5;border:3px solid #e6e6e6;border-bottom:none;"></div>
<div style="left:936px;top:598px;width:1040px;height:1158px;background:#fbfbfb;border:3px solid #e7e7e7;"></div>
<div style="left:1082px;top:540px;width:154px;height:62px;background:#fbfbfb;border:3px solid #e2e2e2;border-bottom:none;"></div>
<div style="left:973px;top:656px;width:971px;height:386px;border:3px solid #e5e5e5;"></div>
<div style="left:992px;top:650px;width:468px;height:14px;background:#fbfbfb;"></div>
<div style="left:973px;top:1091px;width:971px;height:261px;border:3px solid #e5e5e5;"></div>
<div style="left:992px;top:1085px;width:279px;height:14px;background:#fbfbfb;"></div>
<div style="left:973px;top:1404px;width:971px;height:274px;border:3px solid #e5e5e5;"></div>
<div style="left:992px;top:1398px;width:306px;height:14px;background:#fbfbfb;"></div>
<svg style="left:1011px;top:715px" width="84" height="69" viewBox="0 0 49 41"><defs><linearGradient id="f14" x1="0" y1="0" x2="0.3" y2="1"><stop offset="0" stop-color="#ffe9a2"/><stop offset="1" stop-color="#f8cc56"/></linearGradient></defs><path d="M1 6 Q1 1 6 1 L17 1 Q20 1 22 3.5 L25 7 L44 7 Q48 7 48 11 L48 20 L1 20 Z" fill="#e9ad22"/><path d="M1 14 Q1 10.5 5 10.5 L19 10.5 Q21.5 10.5 23 9 L25 7 L44 7 Q48 7 48 11 L48 36 Q48 40 44 40 L5 40 Q1 40 1 36 Z" fill="url(#f14)"/><path d="M1 36 Q1 40 5 40 L44 40 Q48 40 48 36 L48 34 Q48 38 44 38 L5 38 Q1 38 1 34 Z" fill="#e3a92a" opacity=".6"/></svg>
<div style="left:1009px;top:944px;width:214px;height:62px;background:#fdfdfd;border:3px solid #d2d2d2;border-radius:12px;border-bottom-color:#bdbdbd;"></div>
<div style="left:1008px;top:1257px;width:426px;height:64px;background:#fdfdfd;border:4px solid #4f8ec4;border-radius:13px;box-shadow:0 0 0 3px rgba(120,180,230,0.35);"></div>
<svg style="left:1049px;top:1268px" width="44" height="43" viewBox="0 0 45 43"><defs><clipPath id="shc"><path d="M22.500 1 Q33 6 44 6 Q45 30 22.500 42 Q0 30 1 6 Q12 6 22.500 1 Z"/></clipPath></defs><g clip-path="url(#shc)"><rect x="0" y="0" width="22.500" height="21" fill="#2e9be4"/><rect x="22.500" y="0" width="23" height="21" fill="#fbd335"/><rect x="0" y="21" width="22.500" height="23" fill="#f6c21e"/><rect x="22.500" y="21" width="23" height="23" fill="#1f86d4"/></g></svg>
<div style="left:1274px;top:1782px;width:217px;height:61px;background:#fdfdfd;border:3px solid #d2d2d2;border-radius:12px;border-bottom-color:#bdbdbd;"></div>
<div style="left:1519px;top:1782px;width:215px;height:61px;background:#f7f7f7;border:3px solid #ececec;border-radius:12px;"></div>
<div style="left:1763px;top:1782px;width:215px;height:61px;background:#f7f7f7;border:3px solid #ececec;border-radius:12px;"></div>
<svg style="left:1928px;top:724px" width="48" height="72" viewBox="0 0 48 72"><path d="M3.8 3.300 L3.8 57.300 L17.700 46 L26 64.500 L34.500 60 L27 45 L41 43.400 Z" fill="#fff" stroke="#454545" stroke-width="2.700" stroke-linejoin="round"/></svg>
<span style="left:485.5px;top:77.0px;font-size:34px;color:#2e2e2e;font-weight:700;letter-spacing:1.04px;-webkit-text-stroke:0;">New</span>
<span style="left:1653.5px;top:77.0px;font-size:34px;color:#2e2e2e;font-weight:700;letter-spacing:-0.83px;-webkit-text-stroke:0;">Sort</span>
<span style="left:1918.5px;top:77.0px;font-size:34px;color:#2e2e2e;font-weight:700;letter-spacing:-0.29px;-webkit-text-stroke:0;">View</span>
<span style="left:3563px;top:77.0px;font-size:34px;color:#2e2e2e;font-weight:700;letter-spacing:-0.58px;-webkit-text-stroke:0;">Details</span>
<span style="left:524px;top:207.3px;font-size:36px;color:#1b1b1b;letter-spacing:0.66px;">Home</span>
<span style="left:524px;top:303.7px;font-size:36px;color:#1b1b1b;letter-spacing:-1.17px;">Gallery</span>
<span style="left:524px;top:496.5px;font-size:36px;color:#1b1b1b;letter-spacing:-1.01px;">Desktop</span>
<span style="left:524px;top:592.9px;font-size:36px;color:#1b1b1b;letter-spacing:-0.14px;">Downloads</span>
<span style="left:524px;top:689.3px;font-size:36px;color:#1b1b1b;letter-spacing:0.05px;">Documents</span>
<span style="left:524px;top:785.7px;font-size:36px;color:#1b1b1b;letter-spacing:-0.79px;">Pictures</span>
<span style="left:524px;top:882.1px;font-size:36px;color:#1b1b1b;letter-spacing:-0.00px;">Music</span>
<span style="left:524px;top:978.5px;font-size:36px;color:#1b1b1b;letter-spacing:-1.09px;">Videos</span>
<span style="left:524px;top:1171.3px;font-size:36px;color:#1b1b1b;letter-spacing:-1.76px;">This PC</span>
<span style="left:524px;top:1267.7px;font-size:36px;color:#1b1b1b;letter-spacing:0.41px;">Network</span>
<span style="left:931.5px;top:180.8px;font-size:36px;color:#5d6c86;letter-spacing:-0.51px;">Name</span>
<span style="left:1677.3px;top:180.8px;font-size:36px;color:#5d6c86;letter-spacing:0.12px;">Date modified</span>
<span style="left:2112px;top:180.8px;font-size:36px;color:#5d6c86;letter-spacing:-1.68px;">Type</span>
<span style="left:2472px;top:180.8px;font-size:36px;color:#5d6c86;letter-spacing:-3.34px;">Size</span>
<span style="left:955px;top:274.0px;font-size:36px;color:#1b1b1b;letter-spacing:-2.40px;">ArcGIS</span>
<span style="left:1678.5px;top:274.0px;font-size:36px;color:#6a6a6a;letter-spacing:-0.95px;">10/4/2025 7:00 PM</span>
<span style="left:2111.7px;top:274.0px;font-size:36px;color:#6a6a6a;letter-spacing:-0.28px;">File folder</span>
<span style="left:955px;top:358.3px;font-size:36px;color:#1b1b1b;letter-spacing:-1.55px;">ArcGIS Pro 2.9</span>
<span style="left:1678.5px;top:358.3px;font-size:36px;color:#6a6a6a;letter-spacing:-0.95px;">10/4/2025 7:00 PM</span>
<span style="left:2111.7px;top:358.3px;font-size:36px;color:#6a6a6a;letter-spacing:-0.28px;">File folder</span>
<span style="left:2111.7px;top:442.7px;font-size:36px;color:#6a6a6a;letter-spacing:-0.28px;">File folder</span>
<span style="left:2111.7px;top:527.0px;font-size:36px;color:#6a6a6a;letter-spacing:-0.28px;">File folder</span>
<span style="left:2111.7px;top:611.4px;font-size:36px;color:#6a6a6a;letter-spacing:-0.28px;">File folder</span>
<span style="left:2111.7px;top:695.7px;font-size:36px;color:#6a6a6a;letter-spacing:-0.28px;">File folder</span>
<span style="left:2111.7px;top:780.1px;font-size:36px;color:#6a6a6a;letter-spacing:-0.28px;">File folder</span>
<span style="left:2111.7px;top:864.4px;font-size:36px;color:#6a6a6a;letter-spacing:-0.28px;">File folder</span>
<span style="left:2111.7px;top:948.8px;font-size:36px;color:#6a6a6a;letter-spacing:-0.28px;">File folder</span>
<span style="left:2111.7px;top:1033.1px;font-size:36px;color:#6a6a6a;letter-spacing:-0.28px;">File folder</span>
<span style="left:2111.7px;top:1117.5px;font-size:36px;color:#6a6a6a;letter-spacing:-0.28px;">File folder</span>
<span style="left:2111.7px;top:1201.8px;font-size:36px;color:#6a6a6a;letter-spacing:-0.28px;">File folder</span>
<span style="left:2111.7px;top:1286.2px;font-size:36px;color:#1b1b1b;letter-spacing:-0.28px;">File folder</span>
<span style="left:402px;top:1601.6px;font-size:36px;color:#555;letter-spacing:-0.87px;">13 items</span>
<span style="left:597px;top:1601.6px;font-size:36px;color:#555;letter-spacing:-0.44px;">1 item selected</span>
<span style="left:1005.5px;top:451.6px;font-size:36px;color:#1b1b1b;letter-spacing:-0.75px;">TeamShare Properties</span>
<span style="left:955px;top:554.6px;font-size:36px;color:#1b1b1b;letter-spacing:-3.01px;">General</span>
<span style="left:1105px;top:549.6px;font-size:36px;color:#1b1b1b;letter-spacing:-3.18px;">Sharing</span>
<span style="left:1249px;top:554.6px;font-size:36px;color:#1b1b1b;letter-spacing:-2.58px;">Security</span>
<span style="left:1400px;top:554.6px;font-size:36px;color:#1b1b1b;letter-spacing:-2.38px;">Previous Versions</span>
<span style="left:1687px;top:554.6px;font-size:36px;color:#1b1b1b;letter-spacing:-3.26px;">Customize</span>
<span style="left:1000px;top:638.6px;font-size:36px;color:#1b1b1b;letter-spacing:-2.17px;">Network File and Folder Sharing</span>
<span style="left:1000px;top:1075.4px;font-size:36px;color:#1b1b1b;letter-spacing:-2.15px;">Advanced Sharing</span>
<span style="left:1000px;top:1389.0px;font-size:36px;color:#1b1b1b;letter-spacing:-2.29px;">Password Protection</span>
<span style="left:1141px;top:709.1px;font-size:36px;color:#1b1b1b;letter-spacing:-2.76px;">TeamShare</span>
<span style="left:1141px;top:752.6px;font-size:36px;color:#1b1b1b;letter-spacing:-3.02px;">Shared</span>
<span style="left:1006px;top:831.6px;font-size:36px;color:#1b1b1b;letter-spacing:-1.97px;">Network Path:</span>
<span style="left:1006.5px;top:879.6px;font-size:36px;color:#1b1b1b;letter-spacing:-1.25px;">\\WINDOWSVM\TeamShare</span>
<span style="left:1059.5px;top:958.1px;font-size:36px;color:#1b1b1b;letter-spacing:-2.30px;">Share...</span>
<span style="left:1006px;top:1134.6px;font-size:36px;color:#1b1b1b;letter-spacing:-2.09px;">Set custom permissions, create multiple shares, and set other</span>
<span style="left:1005px;top:1173.4px;font-size:36px;color:#1b1b1b;letter-spacing:-1.89px;">advanced sharing options.</span>
<span style="left:1099px;top:1271.1px;font-size:36px;color:#1b1b1b;letter-spacing:-1.90px;">Advanced Sharing...</span>
<span style="left:1006px;top:1458.6px;font-size:36px;color:#1b1b1b;letter-spacing:-1.93px;">People must have a user account and password for this</span>
<span style="left:1004px;top:1497.1px;font-size:36px;color:#1b1b1b;letter-spacing:-1.92px;">computer to access shared folders.</span>
<span style="left:1006px;top:1576.4px;font-size:36px;color:#1b1b1b;letter-spacing:-1.56px;">To change this setting, use the </span>
<span style="left:1454px;top:1576.4px;font-size:36px;color:#3b7bbf;letter-spacing:-2.09px;text-decoration:underline;text-decoration-thickness:3px;text-underline-offset:4px;">Network and Sharing Center</span>
<span style="left:1857px;top:1576.4px;font-size:36px;color:#1b1b1b;">.</span>
<span style="left:1340px;top:1795.6px;font-size:36px;color:#1b1b1b;letter-spacing:-3.51px;">Close</span>
<span style="left:1576px;top:1795.6px;font-size:36px;color:#a3a3a3;letter-spacing:-2.81px;">Cancel</span>
<span style="left:1830px;top:1795.6px;font-size:36px;color:#a3a3a3;letter-spacing:-3.52px;">Apply</span>
</div>
</body></html>
